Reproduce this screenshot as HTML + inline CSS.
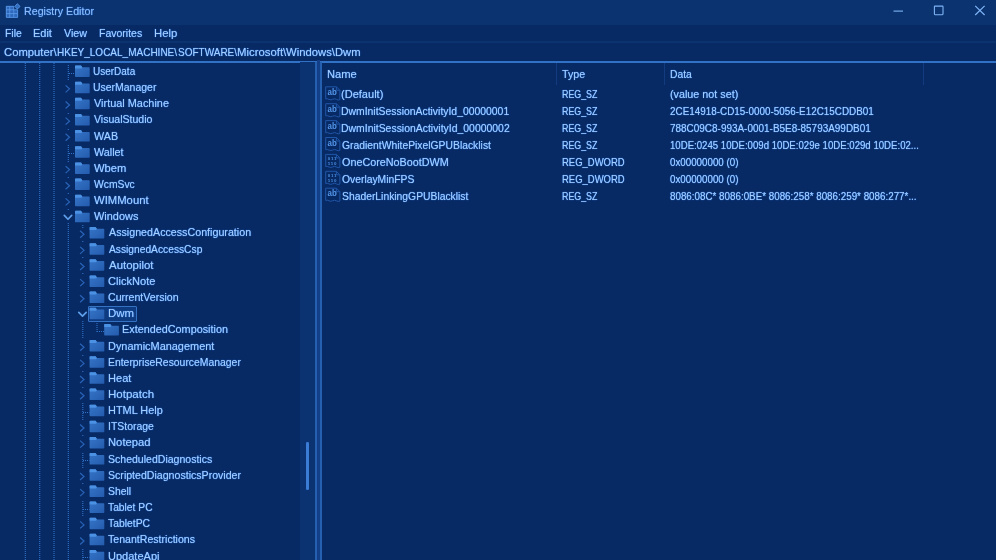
<!DOCTYPE html>
<html><head><meta charset="utf-8"><title>Registry Editor</title>
<style>
html,body{margin:0;padding:0;background:#082a64;}
body{width:996px;height:560px;overflow:hidden;position:relative;font-family:"Liberation Sans",sans-serif;}
#app{position:absolute;left:0;top:0;width:996px;height:560px;overflow:hidden;background:#082a64;}
.bar{position:absolute;left:0;width:996px;}
#title{top:0;height:24.6px;background:#0b3370;}
#menu{top:24.6px;height:17px;background:#082a64;}
#msep{top:41.2px;height:2.1px;background:#0b3370;}
#addr{top:43.3px;height:17.3px;background:#082a64;}
#aline{top:60.6px;height:2.2px;background:#3172c6;}
#track{position:absolute;left:300px;top:62.3px;width:15px;height:498px;background:#0c3371;}
#thumb{position:absolute;left:306.3px;top:442px;width:2.6px;height:47.5px;background:#3a7cd6;border-radius:1.3px;}
.vl{position:absolute;top:62.3px;height:498px;width:2px;background:#2560b0;}
#gap{position:absolute;left:317px;top:60.4px;width:2.5px;height:500px;background:#123f88;}
.hs{position:absolute;top:63px;height:21.5px;width:1px;background:#123b80;}
.t{position:absolute;white-space:pre;transform-origin:0 0;font-size:11.4px;line-height:12px;color:#a6cefd;text-shadow:0 0 1px #2f7ce6,0 0 1px #2f7ce6;}
#txt{position:absolute;left:0;top:0;width:996px;height:560px;filter:blur(0.35px);}
.sel{position:absolute;box-sizing:border-box;border:1px solid #3672c4;background:#0e3a80;border-radius:1px;}
svg{position:absolute;left:0;top:0;overflow:visible;filter:blur(0.35px);}
.dot{fill:none;stroke:#3272c8;stroke-width:1.1;stroke-dasharray:1 1;}
.ab{font-family:"Liberation Sans",sans-serif;font-size:8.8px;font-weight:700;fill:#5497ea;}
.bn{font:bold 4.4px "Liberation Sans",sans-serif;fill:#4d90e4;letter-spacing:0.85px;}
</style></head><body><div id="app">
<div class="bar" id="title"></div><div class="bar" id="menu"></div><div class="bar" id="msep"></div><div class="bar" id="addr"></div><div class="bar" id="aline"></div>
<div id="track"></div><div id="thumb"></div>
<div class="vl" style="left:315px"></div><div id="gap"></div><div class="vl" style="left:319.5px"></div>
<div class="hs" style="left:556px"></div><div class="hs" style="left:664px"></div><div class="hs" style="left:923px"></div>
<div class="sel" style="left:88px;top:305.95px;width:48.5px;height:15.6px"></div>
<svg width="996" height="560" viewBox="0 0 996 560">
<defs><linearGradient id="fg" x1="0" y1="0" x2="1" y2="1"><stop offset="0" stop-color="#3675c8"/><stop offset="1" stop-color="#245cae"/></linearGradient></defs>
<!-- app icon -->
<g id="appicon">
<rect x="6" y="6" width="7.7" height="11.6" fill="#2d68bd"/><rect x="13.7" y="9.6" width="4.1" height="8" fill="#2d68bd"/>
<path d="M6.3 6.3 H13.7 V9.8 H17.6 V17.4 H6.3 Z M9.8 6.3 V17.4 M13.7 9.8 V17.4 M6.3 9.8 H13.7 M6.3 13.6 H17.6" fill="none" stroke="#5c9bea" stroke-width="0.8"/>
<path d="M17.4 3.8 L20.0 6.4 L17.4 9.0 L14.8 6.4 Z" fill="#2f6cc2" stroke="#5a9bea" stroke-width="0.9"/>
</g>
<!-- window controls -->
<path d="M893.5 11.1 H903" stroke="#7fb4f6" stroke-width="1.1" fill="none"/>
<rect x="934.4" y="6.1" width="8.6" height="8.6" fill="none" stroke="#7fb4f6" stroke-width="1.1" rx="0.6"/>
<path d="M975.2 5.9 L984.6 15 M984.6 5.9 L975.2 15" stroke="#7fb4f6" stroke-width="1.2" fill="none"/>
<g transform="translate(75.00,65.30)"><path d="M0.7 0.2 H6.0 L7.3 2.0 H14.0 Q14.7 2.0 14.7 2.7 V11.0 Q14.7 11.7 14.0 11.7 H0.7 Q0 11.7 0 11.0 V0.9 Q0 0.2 0.7 0.2Z" fill="url(#fg)"/><path d="M0.7 0.2 H6.0 L7.3 2.0 L6.5 3.2 H0 V0.9 Q0 0.2 0.7 0.2Z" fill="#4b91e4"/></g><path d="M69 73.50 H75.00" class="dot"/><g transform="translate(75.00,81.45)"><path d="M0.7 0.2 H6.0 L7.3 2.0 H14.0 Q14.7 2.0 14.7 2.7 V11.0 Q14.7 11.7 14.0 11.7 H0.7 Q0 11.7 0 11.0 V0.9 Q0 0.2 0.7 0.2Z" fill="url(#fg)"/><path d="M0.7 0.2 H6.0 L7.3 2.0 L6.5 3.2 H0 V0.9 Q0 0.2 0.7 0.2Z" fill="#4b91e4"/></g><path d="M65.60 85.35 L69.50 88.85 L65.60 92.35" fill="none" stroke="#2964b8" stroke-width="1.2"/><g transform="translate(75.00,97.60)"><path d="M0.7 0.2 H6.0 L7.3 2.0 H14.0 Q14.7 2.0 14.7 2.7 V11.0 Q14.7 11.7 14.0 11.7 H0.7 Q0 11.7 0 11.0 V0.9 Q0 0.2 0.7 0.2Z" fill="url(#fg)"/><path d="M0.7 0.2 H6.0 L7.3 2.0 L6.5 3.2 H0 V0.9 Q0 0.2 0.7 0.2Z" fill="#4b91e4"/></g><path d="M65.60 101.50 L69.50 105.00 L65.60 108.50" fill="none" stroke="#2964b8" stroke-width="1.2"/><g transform="translate(75.00,113.75)"><path d="M0.7 0.2 H6.0 L7.3 2.0 H14.0 Q14.7 2.0 14.7 2.7 V11.0 Q14.7 11.7 14.0 11.7 H0.7 Q0 11.7 0 11.0 V0.9 Q0 0.2 0.7 0.2Z" fill="url(#fg)"/><path d="M0.7 0.2 H6.0 L7.3 2.0 L6.5 3.2 H0 V0.9 Q0 0.2 0.7 0.2Z" fill="#4b91e4"/></g><path d="M65.60 117.65 L69.50 121.15 L65.60 124.65" fill="none" stroke="#2964b8" stroke-width="1.2"/><g transform="translate(75.00,129.90)"><path d="M0.7 0.2 H6.0 L7.3 2.0 H14.0 Q14.7 2.0 14.7 2.7 V11.0 Q14.7 11.7 14.0 11.7 H0.7 Q0 11.7 0 11.0 V0.9 Q0 0.2 0.7 0.2Z" fill="url(#fg)"/><path d="M0.7 0.2 H6.0 L7.3 2.0 L6.5 3.2 H0 V0.9 Q0 0.2 0.7 0.2Z" fill="#4b91e4"/></g><path d="M65.60 133.80 L69.50 137.30 L65.60 140.80" fill="none" stroke="#2964b8" stroke-width="1.2"/><g transform="translate(75.00,146.05)"><path d="M0.7 0.2 H6.0 L7.3 2.0 H14.0 Q14.7 2.0 14.7 2.7 V11.0 Q14.7 11.7 14.0 11.7 H0.7 Q0 11.7 0 11.0 V0.9 Q0 0.2 0.7 0.2Z" fill="url(#fg)"/><path d="M0.7 0.2 H6.0 L7.3 2.0 L6.5 3.2 H0 V0.9 Q0 0.2 0.7 0.2Z" fill="#4b91e4"/></g><path d="M69 153.50 H75.00" class="dot"/><g transform="translate(75.00,162.20)"><path d="M0.7 0.2 H6.0 L7.3 2.0 H14.0 Q14.7 2.0 14.7 2.7 V11.0 Q14.7 11.7 14.0 11.7 H0.7 Q0 11.7 0 11.0 V0.9 Q0 0.2 0.7 0.2Z" fill="url(#fg)"/><path d="M0.7 0.2 H6.0 L7.3 2.0 L6.5 3.2 H0 V0.9 Q0 0.2 0.7 0.2Z" fill="#4b91e4"/></g><path d="M65.60 166.10 L69.50 169.60 L65.60 173.10" fill="none" stroke="#2964b8" stroke-width="1.2"/><g transform="translate(75.00,178.35)"><path d="M0.7 0.2 H6.0 L7.3 2.0 H14.0 Q14.7 2.0 14.7 2.7 V11.0 Q14.7 11.7 14.0 11.7 H0.7 Q0 11.7 0 11.0 V0.9 Q0 0.2 0.7 0.2Z" fill="url(#fg)"/><path d="M0.7 0.2 H6.0 L7.3 2.0 L6.5 3.2 H0 V0.9 Q0 0.2 0.7 0.2Z" fill="#4b91e4"/></g><path d="M65.60 182.25 L69.50 185.75 L65.60 189.25" fill="none" stroke="#2964b8" stroke-width="1.2"/><g transform="translate(75.00,194.50)"><path d="M0.7 0.2 H6.0 L7.3 2.0 H14.0 Q14.7 2.0 14.7 2.7 V11.0 Q14.7 11.7 14.0 11.7 H0.7 Q0 11.7 0 11.0 V0.9 Q0 0.2 0.7 0.2Z" fill="url(#fg)"/><path d="M0.7 0.2 H6.0 L7.3 2.0 L6.5 3.2 H0 V0.9 Q0 0.2 0.7 0.2Z" fill="#4b91e4"/></g><path d="M65.60 198.40 L69.50 201.90 L65.60 205.40" fill="none" stroke="#2964b8" stroke-width="1.2"/><g transform="translate(75.00,210.65)"><path d="M0.7 0.2 H6.0 L7.3 2.0 H14.0 Q14.7 2.0 14.7 2.7 V11.0 Q14.7 11.7 14.0 11.7 H0.7 Q0 11.7 0 11.0 V0.9 Q0 0.2 0.7 0.2Z" fill="url(#fg)"/><path d="M0.7 0.2 H6.0 L7.3 2.0 L6.5 3.2 H0 V0.9 Q0 0.2 0.7 0.2Z" fill="#4b91e4"/></g><path d="M64.30 215.45 L68.00 219.25 L71.70 215.45" fill="none" stroke="#5e9feb" stroke-width="1.7" stroke-linecap="round" stroke-linejoin="round"/><g transform="translate(89.60,226.80)"><path d="M0.7 0.2 H6.0 L7.3 2.0 H14.0 Q14.7 2.0 14.7 2.7 V11.0 Q14.7 11.7 14.0 11.7 H0.7 Q0 11.7 0 11.0 V0.9 Q0 0.2 0.7 0.2Z" fill="url(#fg)"/><path d="M0.7 0.2 H6.0 L7.3 2.0 L6.5 3.2 H0 V0.9 Q0 0.2 0.7 0.2Z" fill="#4b91e4"/></g><path d="M80.10 230.70 L84.00 234.20 L80.10 237.70" fill="none" stroke="#2964b8" stroke-width="1.2"/><g transform="translate(89.60,242.95)"><path d="M0.7 0.2 H6.0 L7.3 2.0 H14.0 Q14.7 2.0 14.7 2.7 V11.0 Q14.7 11.7 14.0 11.7 H0.7 Q0 11.7 0 11.0 V0.9 Q0 0.2 0.7 0.2Z" fill="url(#fg)"/><path d="M0.7 0.2 H6.0 L7.3 2.0 L6.5 3.2 H0 V0.9 Q0 0.2 0.7 0.2Z" fill="#4b91e4"/></g><path d="M80.10 246.85 L84.00 250.35 L80.10 253.85" fill="none" stroke="#2964b8" stroke-width="1.2"/><g transform="translate(89.60,259.10)"><path d="M0.7 0.2 H6.0 L7.3 2.0 H14.0 Q14.7 2.0 14.7 2.7 V11.0 Q14.7 11.7 14.0 11.7 H0.7 Q0 11.7 0 11.0 V0.9 Q0 0.2 0.7 0.2Z" fill="url(#fg)"/><path d="M0.7 0.2 H6.0 L7.3 2.0 L6.5 3.2 H0 V0.9 Q0 0.2 0.7 0.2Z" fill="#4b91e4"/></g><path d="M80.10 263.00 L84.00 266.50 L80.10 270.00" fill="none" stroke="#2964b8" stroke-width="1.2"/><g transform="translate(89.60,275.25)"><path d="M0.7 0.2 H6.0 L7.3 2.0 H14.0 Q14.7 2.0 14.7 2.7 V11.0 Q14.7 11.7 14.0 11.7 H0.7 Q0 11.7 0 11.0 V0.9 Q0 0.2 0.7 0.2Z" fill="url(#fg)"/><path d="M0.7 0.2 H6.0 L7.3 2.0 L6.5 3.2 H0 V0.9 Q0 0.2 0.7 0.2Z" fill="#4b91e4"/></g><path d="M80.10 279.15 L84.00 282.65 L80.10 286.15" fill="none" stroke="#2964b8" stroke-width="1.2"/><g transform="translate(89.60,291.40)"><path d="M0.7 0.2 H6.0 L7.3 2.0 H14.0 Q14.7 2.0 14.7 2.7 V11.0 Q14.7 11.7 14.0 11.7 H0.7 Q0 11.7 0 11.0 V0.9 Q0 0.2 0.7 0.2Z" fill="url(#fg)"/><path d="M0.7 0.2 H6.0 L7.3 2.0 L6.5 3.2 H0 V0.9 Q0 0.2 0.7 0.2Z" fill="#4b91e4"/></g><path d="M80.10 295.30 L84.00 298.80 L80.10 302.30" fill="none" stroke="#2964b8" stroke-width="1.2"/><g transform="translate(89.60,307.55)"><path d="M0.7 0.2 H6.0 L7.3 2.0 H14.0 Q14.7 2.0 14.7 2.7 V11.0 Q14.7 11.7 14.0 11.7 H0.7 Q0 11.7 0 11.0 V0.9 Q0 0.2 0.7 0.2Z" fill="url(#fg)"/><path d="M0.7 0.2 H6.0 L7.3 2.0 L6.5 3.2 H0 V0.9 Q0 0.2 0.7 0.2Z" fill="#4b91e4"/></g><path d="M78.80 312.35 L82.50 316.15 L86.20 312.35" fill="none" stroke="#5e9feb" stroke-width="1.7" stroke-linecap="round" stroke-linejoin="round"/><g transform="translate(104.20,323.70)"><path d="M0.7 0.2 H6.0 L7.3 2.0 H14.0 Q14.7 2.0 14.7 2.7 V11.0 Q14.7 11.7 14.0 11.7 H0.7 Q0 11.7 0 11.0 V0.9 Q0 0.2 0.7 0.2Z" fill="url(#fg)"/><path d="M0.7 0.2 H6.0 L7.3 2.0 L6.5 3.2 H0 V0.9 Q0 0.2 0.7 0.2Z" fill="#4b91e4"/></g><path d="M97 331.50 H104.20" class="dot"/><g transform="translate(89.60,339.85)"><path d="M0.7 0.2 H6.0 L7.3 2.0 H14.0 Q14.7 2.0 14.7 2.7 V11.0 Q14.7 11.7 14.0 11.7 H0.7 Q0 11.7 0 11.0 V0.9 Q0 0.2 0.7 0.2Z" fill="url(#fg)"/><path d="M0.7 0.2 H6.0 L7.3 2.0 L6.5 3.2 H0 V0.9 Q0 0.2 0.7 0.2Z" fill="#4b91e4"/></g><path d="M80.10 343.75 L84.00 347.25 L80.10 350.75" fill="none" stroke="#2964b8" stroke-width="1.2"/><g transform="translate(89.60,356.00)"><path d="M0.7 0.2 H6.0 L7.3 2.0 H14.0 Q14.7 2.0 14.7 2.7 V11.0 Q14.7 11.7 14.0 11.7 H0.7 Q0 11.7 0 11.0 V0.9 Q0 0.2 0.7 0.2Z" fill="url(#fg)"/><path d="M0.7 0.2 H6.0 L7.3 2.0 L6.5 3.2 H0 V0.9 Q0 0.2 0.7 0.2Z" fill="#4b91e4"/></g><path d="M80.10 359.90 L84.00 363.40 L80.10 366.90" fill="none" stroke="#2964b8" stroke-width="1.2"/><g transform="translate(89.60,372.15)"><path d="M0.7 0.2 H6.0 L7.3 2.0 H14.0 Q14.7 2.0 14.7 2.7 V11.0 Q14.7 11.7 14.0 11.7 H0.7 Q0 11.7 0 11.0 V0.9 Q0 0.2 0.7 0.2Z" fill="url(#fg)"/><path d="M0.7 0.2 H6.0 L7.3 2.0 L6.5 3.2 H0 V0.9 Q0 0.2 0.7 0.2Z" fill="#4b91e4"/></g><path d="M80.10 376.05 L84.00 379.55 L80.10 383.05" fill="none" stroke="#2964b8" stroke-width="1.2"/><g transform="translate(89.60,388.30)"><path d="M0.7 0.2 H6.0 L7.3 2.0 H14.0 Q14.7 2.0 14.7 2.7 V11.0 Q14.7 11.7 14.0 11.7 H0.7 Q0 11.7 0 11.0 V0.9 Q0 0.2 0.7 0.2Z" fill="url(#fg)"/><path d="M0.7 0.2 H6.0 L7.3 2.0 L6.5 3.2 H0 V0.9 Q0 0.2 0.7 0.2Z" fill="#4b91e4"/></g><path d="M80.10 392.20 L84.00 395.70 L80.10 399.20" fill="none" stroke="#2964b8" stroke-width="1.2"/><g transform="translate(89.60,404.45)"><path d="M0.7 0.2 H6.0 L7.3 2.0 H14.0 Q14.7 2.0 14.7 2.7 V11.0 Q14.7 11.7 14.0 11.7 H0.7 Q0 11.7 0 11.0 V0.9 Q0 0.2 0.7 0.2Z" fill="url(#fg)"/><path d="M0.7 0.2 H6.0 L7.3 2.0 L6.5 3.2 H0 V0.9 Q0 0.2 0.7 0.2Z" fill="#4b91e4"/></g><path d="M83 412.50 H89.60" class="dot"/><g transform="translate(89.60,420.60)"><path d="M0.7 0.2 H6.0 L7.3 2.0 H14.0 Q14.7 2.0 14.7 2.7 V11.0 Q14.7 11.7 14.0 11.7 H0.7 Q0 11.7 0 11.0 V0.9 Q0 0.2 0.7 0.2Z" fill="url(#fg)"/><path d="M0.7 0.2 H6.0 L7.3 2.0 L6.5 3.2 H0 V0.9 Q0 0.2 0.7 0.2Z" fill="#4b91e4"/></g><path d="M80.10 424.50 L84.00 428.00 L80.10 431.50" fill="none" stroke="#2964b8" stroke-width="1.2"/><g transform="translate(89.60,436.75)"><path d="M0.7 0.2 H6.0 L7.3 2.0 H14.0 Q14.7 2.0 14.7 2.7 V11.0 Q14.7 11.7 14.0 11.7 H0.7 Q0 11.7 0 11.0 V0.9 Q0 0.2 0.7 0.2Z" fill="url(#fg)"/><path d="M0.7 0.2 H6.0 L7.3 2.0 L6.5 3.2 H0 V0.9 Q0 0.2 0.7 0.2Z" fill="#4b91e4"/></g><path d="M80.10 440.65 L84.00 444.15 L80.10 447.65" fill="none" stroke="#2964b8" stroke-width="1.2"/><g transform="translate(89.60,452.90)"><path d="M0.7 0.2 H6.0 L7.3 2.0 H14.0 Q14.7 2.0 14.7 2.7 V11.0 Q14.7 11.7 14.0 11.7 H0.7 Q0 11.7 0 11.0 V0.9 Q0 0.2 0.7 0.2Z" fill="url(#fg)"/><path d="M0.7 0.2 H6.0 L7.3 2.0 L6.5 3.2 H0 V0.9 Q0 0.2 0.7 0.2Z" fill="#4b91e4"/></g><path d="M83 460.50 H89.60" class="dot"/><g transform="translate(89.60,469.05)"><path d="M0.7 0.2 H6.0 L7.3 2.0 H14.0 Q14.7 2.0 14.7 2.7 V11.0 Q14.7 11.7 14.0 11.7 H0.7 Q0 11.7 0 11.0 V0.9 Q0 0.2 0.7 0.2Z" fill="url(#fg)"/><path d="M0.7 0.2 H6.0 L7.3 2.0 L6.5 3.2 H0 V0.9 Q0 0.2 0.7 0.2Z" fill="#4b91e4"/></g><path d="M80.10 472.95 L84.00 476.45 L80.10 479.95" fill="none" stroke="#2964b8" stroke-width="1.2"/><g transform="translate(89.60,485.20)"><path d="M0.7 0.2 H6.0 L7.3 2.0 H14.0 Q14.7 2.0 14.7 2.7 V11.0 Q14.7 11.7 14.0 11.7 H0.7 Q0 11.7 0 11.0 V0.9 Q0 0.2 0.7 0.2Z" fill="url(#fg)"/><path d="M0.7 0.2 H6.0 L7.3 2.0 L6.5 3.2 H0 V0.9 Q0 0.2 0.7 0.2Z" fill="#4b91e4"/></g><path d="M80.10 489.10 L84.00 492.60 L80.10 496.10" fill="none" stroke="#2964b8" stroke-width="1.2"/><g transform="translate(89.60,501.35)"><path d="M0.7 0.2 H6.0 L7.3 2.0 H14.0 Q14.7 2.0 14.7 2.7 V11.0 Q14.7 11.7 14.0 11.7 H0.7 Q0 11.7 0 11.0 V0.9 Q0 0.2 0.7 0.2Z" fill="url(#fg)"/><path d="M0.7 0.2 H6.0 L7.3 2.0 L6.5 3.2 H0 V0.9 Q0 0.2 0.7 0.2Z" fill="#4b91e4"/></g><path d="M83 509.50 H89.60" class="dot"/><g transform="translate(89.60,517.50)"><path d="M0.7 0.2 H6.0 L7.3 2.0 H14.0 Q14.7 2.0 14.7 2.7 V11.0 Q14.7 11.7 14.0 11.7 H0.7 Q0 11.7 0 11.0 V0.9 Q0 0.2 0.7 0.2Z" fill="url(#fg)"/><path d="M0.7 0.2 H6.0 L7.3 2.0 L6.5 3.2 H0 V0.9 Q0 0.2 0.7 0.2Z" fill="#4b91e4"/></g><path d="M80.10 521.40 L84.00 524.90 L80.10 528.40" fill="none" stroke="#2964b8" stroke-width="1.2"/><g transform="translate(89.60,533.65)"><path d="M0.7 0.2 H6.0 L7.3 2.0 H14.0 Q14.7 2.0 14.7 2.7 V11.0 Q14.7 11.7 14.0 11.7 H0.7 Q0 11.7 0 11.0 V0.9 Q0 0.2 0.7 0.2Z" fill="url(#fg)"/><path d="M0.7 0.2 H6.0 L7.3 2.0 L6.5 3.2 H0 V0.9 Q0 0.2 0.7 0.2Z" fill="#4b91e4"/></g><path d="M80.10 537.55 L84.00 541.05 L80.10 544.55" fill="none" stroke="#2964b8" stroke-width="1.2"/><g transform="translate(89.60,549.80)"><path d="M0.7 0.2 H6.0 L7.3 2.0 H14.0 Q14.7 2.0 14.7 2.7 V11.0 Q14.7 11.7 14.0 11.7 H0.7 Q0 11.7 0 11.0 V0.9 Q0 0.2 0.7 0.2Z" fill="url(#fg)"/><path d="M0.7 0.2 H6.0 L7.3 2.0 L6.5 3.2 H0 V0.9 Q0 0.2 0.7 0.2Z" fill="#4b91e4"/></g><path d="M83 557.50 H89.60" class="dot"/><path d="M25.30 63 V560" class="dot"/><path d="M39.70 63 V560" class="dot"/><path d="M54.00 63 V560" class="dot"/><path d="M68.30 65 V80" class="dot"/><path d="M68.30 113 V114" class="dot"/><path d="M68.30 129 V130" class="dot"/><path d="M68.30 145 V161" class="dot"/><path d="M68.30 161 V162" class="dot"/><path d="M68.30 177 V178" class="dot"/><path d="M68.30 193 V194" class="dot"/><path d="M68.30 209 V210" class="dot"/><path d="M68.30 227 V242" class="dot"/><path d="M68.30 243 V258" class="dot"/><path d="M82.80 241 V243" class="dot"/><path d="M68.30 259 V274" class="dot"/><path d="M82.80 257 V259" class="dot"/><path d="M68.30 275 V290" class="dot"/><path d="M82.80 273 V275" class="dot"/><path d="M68.30 291 V307" class="dot"/><path d="M68.30 307 V323" class="dot"/><path d="M68.30 323 V339" class="dot"/><path d="M82.80 321 V339" class="dot"/><path d="M97.00 321 V332" class="dot"/><path d="M68.30 339 V355" class="dot"/><path d="M68.30 355 V371" class="dot"/><path d="M82.80 355 V356" class="dot"/><path d="M68.30 371 V387" class="dot"/><path d="M82.80 371 V372" class="dot"/><path d="M68.30 387 V403" class="dot"/><path d="M82.80 387 V388" class="dot"/><path d="M68.30 403 V420" class="dot"/><path d="M82.80 403 V420" class="dot"/><path d="M68.30 421 V436" class="dot"/><path d="M68.30 437 V452" class="dot"/><path d="M82.80 435 V437" class="dot"/><path d="M68.30 453 V468" class="dot"/><path d="M82.80 453 V468" class="dot"/><path d="M68.30 469 V484" class="dot"/><path d="M68.30 485 V500" class="dot"/><path d="M82.80 483 V485" class="dot"/><path d="M68.30 501 V517" class="dot"/><path d="M82.80 501 V517" class="dot"/><path d="M68.30 517 V533" class="dot"/><path d="M68.30 533 V549" class="dot"/><path d="M68.30 549 V565" class="dot"/><path d="M82.80 549 V560" class="dot"/><path d="M68.30 223 V226" class="dot"/><path d="M82.80 225 V228" class="dot"/>
<path transform="translate(325.20,86.70)" d="M0.5 0.1 H11.2 L14.7 3.6 V12.9 Q13 13.9 11.2 12.7 T7.5 12.6 T3.8 12.7 T0.5 12.3 Z M11.2 0.1 V3.6 H14.7" fill="none" stroke="#2056a8" stroke-width="1"/><text transform="translate(327.6,94.90) scale(0.9,1)" class="ab">ab</text><path transform="translate(325.20,103.60)" d="M0.5 0.1 H11.2 L14.7 3.6 V12.9 Q13 13.9 11.2 12.7 T7.5 12.6 T3.8 12.7 T0.5 12.3 Z M11.2 0.1 V3.6 H14.7" fill="none" stroke="#2056a8" stroke-width="1"/><text transform="translate(327.6,111.80) scale(0.9,1)" class="ab">ab</text><path transform="translate(325.20,120.50)" d="M0.5 0.1 H11.2 L14.7 3.6 V12.9 Q13 13.9 11.2 12.7 T7.5 12.6 T3.8 12.7 T0.5 12.3 Z M11.2 0.1 V3.6 H14.7" fill="none" stroke="#2056a8" stroke-width="1"/><text transform="translate(327.6,128.70) scale(0.9,1)" class="ab">ab</text><path transform="translate(325.20,137.40)" d="M0.5 0.1 H11.2 L14.7 3.6 V12.9 Q13 13.9 11.2 12.7 T7.5 12.6 T3.8 12.7 T0.5 12.3 Z M11.2 0.1 V3.6 H14.7" fill="none" stroke="#2056a8" stroke-width="1"/><text transform="translate(327.6,145.60) scale(0.9,1)" class="ab">ab</text><path transform="translate(325.20,154.30)" d="M0.5 0.1 H11.2 L14.7 3.6 V12.9 Q13 13.9 11.2 12.7 T7.5 12.6 T3.8 12.7 T0.5 12.3 Z M11.2 0.1 V3.6 H14.7" fill="none" stroke="#2056a8" stroke-width="1"/><text x="327.7" y="159.80" class="bn">011</text><text x="327.7" y="165.00" class="bn">110</text><path transform="translate(325.20,171.20)" d="M0.5 0.1 H11.2 L14.7 3.6 V12.9 Q13 13.9 11.2 12.7 T7.5 12.6 T3.8 12.7 T0.5 12.3 Z M11.2 0.1 V3.6 H14.7" fill="none" stroke="#2056a8" stroke-width="1"/><text x="327.7" y="176.70" class="bn">011</text><text x="327.7" y="181.90" class="bn">110</text><path transform="translate(325.20,188.10)" d="M0.5 0.1 H11.2 L14.7 3.6 V12.9 Q13 13.9 11.2 12.7 T7.5 12.6 T3.8 12.7 T0.5 12.3 Z M11.2 0.1 V3.6 H14.7" fill="none" stroke="#2056a8" stroke-width="1"/><text transform="translate(327.6,196.30) scale(0.9,1)" class="ab">ab</text>
</svg>
<div id="txt"><span class="t" style="left:24.13px;top:5px;font-size:11.7px;transform:scaleX(0.9124);color:#8ebaf4;">Registry Editor</span><span class="t" style="left:4.68px;top:27px;transform:scaleX(0.9129);">File</span><span class="t" style="left:33.13px;top:27px;transform:scaleX(0.9638);">Edit</span><span class="t" style="left:63.95px;top:27px;transform:scaleX(0.9380);">View</span><span class="t" style="left:98.67px;top:27px;transform:scaleX(0.9215);">Favorites</span><span class="t" style="left:153.60px;top:27px;transform:scaleX(0.9952);">Help</span><span class="t" style="left:4.26px;top:46px;transform:scaleX(0.9905);">Computer\</span><span class="t" style="left:57.41px;top:46px;transform:scaleX(0.8781);">HKEY_LOCAL_MACHINE\</span><span class="t" style="left:177.96px;top:46px;transform:scaleX(0.8778);">SOFTWARE\</span><span class="t" style="left:237.00px;top:46px;transform:scaleX(0.9971);">Microsoft\</span><span class="t" style="left:286.45px;top:46px;transform:scaleX(0.9920);">Windows\</span><span class="t" style="left:335.02px;top:46px;transform:scaleX(0.9829);">Dwm</span><span class="t" style="left:93.25px;top:65px;transform:scaleX(0.8772);">UserData</span><span class="t" style="left:93.22px;top:81px;transform:scaleX(0.9182);">UserManager</span><span class="t" style="left:93.95px;top:97px;transform:scaleX(0.9573);">Virtual Machine</span><span class="t" style="left:93.95px;top:113px;transform:scaleX(0.9254);">VisualStudio</span><span class="t" style="left:93.95px;top:130px;transform:scaleX(0.9422);">WAB</span><span class="t" style="left:93.95px;top:146px;transform:scaleX(0.9476);">Wallet</span><span class="t" style="left:93.95px;top:162px;transform:scaleX(0.9801);">Wbem</span><span class="t" style="left:93.95px;top:178px;transform:scaleX(0.9079);">WcmSvc</span><span class="t" style="left:93.95px;top:194px;transform:scaleX(0.9911);">WIMMount</span><span class="t" style="left:93.95px;top:210px;transform:scaleX(0.9608);">Windows</span><span class="t" style="left:108.50px;top:226px;transform:scaleX(0.9389);">AssignedAccessConfiguration</span><span class="t" style="left:108.50px;top:243px;transform:scaleX(0.8988);">AssignedAccessCsp</span><span class="t" style="left:108.50px;top:259px;transform:scaleX(1.0046);">Autopilot</span><span class="t" style="left:107.96px;top:275px;transform:scaleX(0.9741);">ClickNote</span><span class="t" style="left:107.99px;top:291px;transform:scaleX(0.9298);">CurrentVersion</span><span class="t" style="left:107.59px;top:307px;transform:scaleX(1.0076);">Dwm</span><span class="t" style="left:122.14px;top:323px;transform:scaleX(0.9509);">ExtendedComposition</span><span class="t" style="left:107.64px;top:340px;transform:scaleX(0.9598);">DynamicManagement</span><span class="t" style="left:107.68px;top:356px;transform:scaleX(0.9123);">EnterpriseResourceManager</span><span class="t" style="left:107.62px;top:372px;transform:scaleX(0.9735);">Heat</span><span class="t" style="left:107.59px;top:388px;transform:scaleX(1.0116);">Hotpatch</span><span class="t" style="left:107.64px;top:404px;transform:scaleX(0.9591);">HTML Help</span><span class="t" style="left:107.54px;top:420px;transform:scaleX(0.9172);">ITStorage</span><span class="t" style="left:107.61px;top:436px;transform:scaleX(0.9877);">Notepad</span><span class="t" style="left:108.04px;top:453px;transform:scaleX(0.9249);">ScheduledDiagnostics</span><span class="t" style="left:108.04px;top:469px;transform:scaleX(0.9295);">ScriptedDiagnosticsProvider</span><span class="t" style="left:108.04px;top:485px;transform:scaleX(0.9122);">Shell</span><span class="t" style="left:108.27px;top:501px;transform:scaleX(0.9027);">Tablet PC</span><span class="t" style="left:108.27px;top:517px;transform:scaleX(0.9106);">TabletPC</span><span class="t" style="left:108.27px;top:533px;transform:scaleX(0.9288);">TenantRestrictions</span><span class="t" style="left:107.68px;top:550px;transform:scaleX(0.9680);">UpdateApi</span><span class="t" style="left:326.62px;top:68px;transform:scaleX(0.9821);">Name</span><span class="t" style="left:562.27px;top:68px;transform:scaleX(0.9385);">Type</span><span class="t" style="left:669.68px;top:68px;transform:scaleX(0.9056);">Data</span><span class="t" style="left:341.32px;top:88px;transform:scaleX(0.9689);">(Default)</span><span class="t" style="left:561.80px;top:88px;transform:scaleX(0.7771);">REG_SZ</span><span class="t" style="left:669.84px;top:88px;transform:scaleX(0.9458);">(value not set)</span><span class="t" style="left:341.18px;top:105px;transform:scaleX(0.9128);">DwmInitSessionActivityId_00000001</span><span class="t" style="left:561.80px;top:105px;transform:scaleX(0.7771);">REG_SZ</span><span class="t" style="left:670.02px;top:105px;transform:scaleX(0.8675);">2CE14918-CD15-0000-5056-E12C15CDDB01</span><span class="t" style="left:341.18px;top:122px;transform:scaleX(0.9155);">DwmInitSessionActivityId_00000002</span><span class="t" style="left:561.80px;top:122px;transform:scaleX(0.7771);">REG_SZ</span><span class="t" style="left:670.02px;top:122px;transform:scaleX(0.8735);">788C09C8-993A-0001-B5E8-85793A99DB01</span><span class="t" style="left:341.50px;top:139px;transform:scaleX(0.9084);">GradientWhitePixelGPUBlacklist</span><span class="t" style="left:561.80px;top:139px;transform:scaleX(0.7771);">REG_SZ</span><span class="t" style="left:669.78px;top:139px;transform:scaleX(0.8452);">10DE:0245 10DE:009d 10DE:029e 10DE:029d 10DE:02...</span><span class="t" style="left:341.53px;top:156px;transform:scaleX(0.9473);">OneCoreNoBootDWM</span><span class="t" style="left:561.75px;top:156px;transform:scaleX(0.8318);">REG_DWORD</span><span class="t" style="left:670.16px;top:156px;transform:scaleX(0.8570);">0x00000000 (0)</span><span class="t" style="left:341.55px;top:173px;transform:scaleX(0.9072);">OverlayMinFPS</span><span class="t" style="left:561.75px;top:173px;transform:scaleX(0.8318);">REG_DWORD</span><span class="t" style="left:670.16px;top:173px;transform:scaleX(0.8570);">0x00000000 (0)</span><span class="t" style="left:341.55px;top:190px;transform:scaleX(0.9076);">ShaderLinkingGPUBlacklist</span><span class="t" style="left:561.80px;top:190px;transform:scaleX(0.7771);">REG_SZ</span><span class="t" style="left:670.11px;top:190px;transform:scaleX(0.8613);">8086:08C* 8086:0BE* 8086:258* 8086:259* 8086:277*...</span></div>
</div></body></html>
